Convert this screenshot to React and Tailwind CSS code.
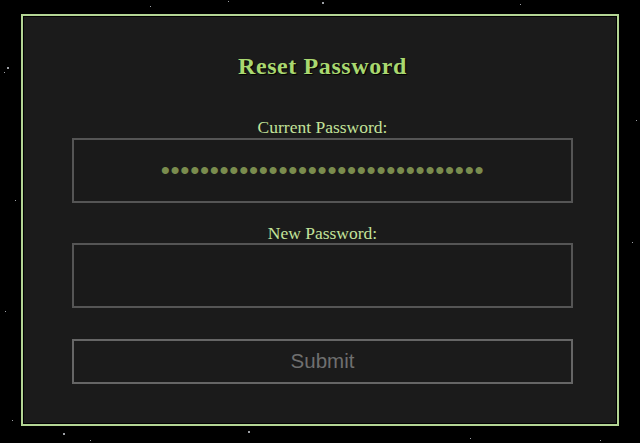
import React from "react";

const stars = [
  [7, 67, 2], [4, 72, 1], [228, 1, 1], [322, 2, 2], [632, 242, 1], [63, 433, 2],
  [248, 431, 2], [5, 311, 1], [90, 440, 1], [470, 438, 1], [600, 440, 1], [636, 120, 1],
  [15, 200, 1], [520, 4, 1], [150, 6, 1], [12, 420, 1],
];

export default function App() {
  return (
    <div className="relative w-[640px] h-[443px] bg-black overflow-hidden">
      {stars.map(([x, y, s], i) => (
        <span
          key={i}
          className="absolute rounded-full bg-gray-300"
          style={{ left: x, top: y, width: s, height: s }}
        />
      ))}

      <div className="relative flex h-full items-start justify-center pt-[14px]">
        <div className="w-[598px] h-[412px] border-2 border-[#b3d494] bg-[#1b1b1b] shadow-[inset_0_0_0_1px_#000] pl-[49px] pr-[44px] pt-[35px] flex flex-col font-['Liberation_Serif',serif]">
          <h1 className="text-center text-[24px] leading-[30px] font-bold tracking-[0.6px] text-[#a9d870] [text-shadow:1px_1px_1px_#000]">
            Reset Password
          </h1>

          <label className="mt-[37px] h-[18px] text-center text-[17.5px] leading-[18px] text-[#c3e39a]">
            Current Password:
          </label>
          <input
            type="password"
            readOnly
            value="passwordpasswordpasswordpassword1"
            className="mt-[2px] h-[65px] w-full border-2 border-[#555] bg-[#1a1a1a] text-center font-['Liberation_Sans',sans-serif] text-[26px] tracking-[0.7px] text-[#7a8c4e] outline-none"
          />

          <label className="mt-[21px] h-[18px] text-center text-[17.5px] leading-[18px] text-[#c3e39a]">
            New Password:
          </label>
          <input
            type="password"
            className="mt-[1px] h-[65px] w-full border-2 border-[#555] bg-[#1a1a1a] text-center text-[20px] text-[#7a8c4e] outline-none"
          />

          <button className="mt-[31px] h-[45px] w-full border-2 border-[#666] bg-[#1b1b1b] font-['Liberation_Sans',sans-serif] text-[20.5px] text-[#6f6f6f]">
            Submit
          </button>
        </div>
      </div>
    </div>
  );
}
